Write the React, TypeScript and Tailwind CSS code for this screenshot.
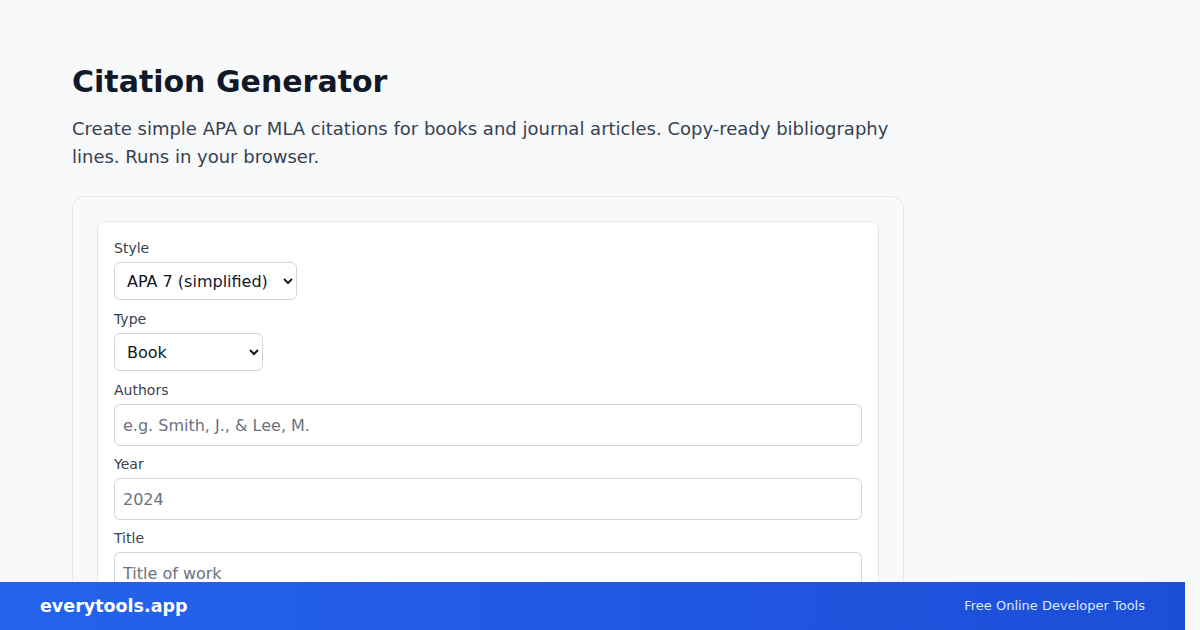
import React from "react"

const font = { fontFamily: '"DejaVu Sans", sans-serif' }

function Field({ label, children, className = "" }: { label: string; children: React.ReactNode; className?: string }) {
  return (
    <div className={`flex flex-col items-start ${className}`}>
      <label className="text-sm leading-5 text-[#374151]">{label}</label>
      <div className="mt-1 w-full">{children}</div>
    </div>
  )
}

const inputCls =
  "h-[42px] w-full rounded-md border border-[#d1d5db] bg-white px-2 text-base text-[#111827] placeholder:text-[#6b7280]"

export default function App() {
  return (
    <div className="relative h-[630px] w-[1200px] overflow-hidden bg-[#f8f9fb]" style={font}>
      <div className="mx-[72px] w-[832px] pt-[64px]">
        <h1 className="text-[30px] font-bold leading-9 text-[#111827]">Citation Generator</h1>
        <p className="mt-[15px] text-lg leading-7 text-[#374151]">
          Create simple APA or MLA citations for books and journal articles. Copy-ready bibliography lines. Runs in your browser.
        </p>

        <div className="mt-[25px] rounded-xl border border-[#e5e7eb] bg-[#f8f9fb] p-6">
          <div className="rounded-lg border border-[#e5e7eb] bg-white p-4">
            <div className="flex flex-col gap-2">
              <Field label="Style" className="mb-px">
                <select className="h-[38px] w-[183px] rounded-md border border-[#d1d5db] bg-white pl-2 pr-1 text-base text-[#111827]">
                  <option>APA 7 (simplified)</option>
                  <option>MLA 9 (simplified)</option>
                </select>
              </Field>
              <Field label="Type" className="mb-px">
                <select className="h-[38px] w-[149px] rounded-md border border-[#d1d5db] bg-white pl-2 pr-1 text-base text-[#111827]">
                  <option>Book</option>
                  <option>Journal article</option>
                </select>
              </Field>
              <Field label="Authors">
                <input className={inputCls} placeholder="e.g. Smith, J., & Lee, M." />
              </Field>
              <Field label="Year">
                <input className={inputCls} placeholder="2024" />
              </Field>
              <Field label="Title">
                <input className={inputCls} placeholder="Title of work" />
              </Field>
              <Field label="Publisher">
                <input className={inputCls} placeholder="Publisher" />
              </Field>
            </div>
          </div>
        </div>
      </div>

      <div className="absolute bottom-0 left-0 flex h-12 w-[1185px] items-center justify-between bg-gradient-to-r from-[#2563eb] to-[#1d4ed8] px-10">
        <span className="text-[17.5px] font-bold text-white">everytools.app</span>
        <span className="text-[13px] text-[#dbeafe]">Free Online Developer Tools</span>
      </div>
    </div>
  )
}
